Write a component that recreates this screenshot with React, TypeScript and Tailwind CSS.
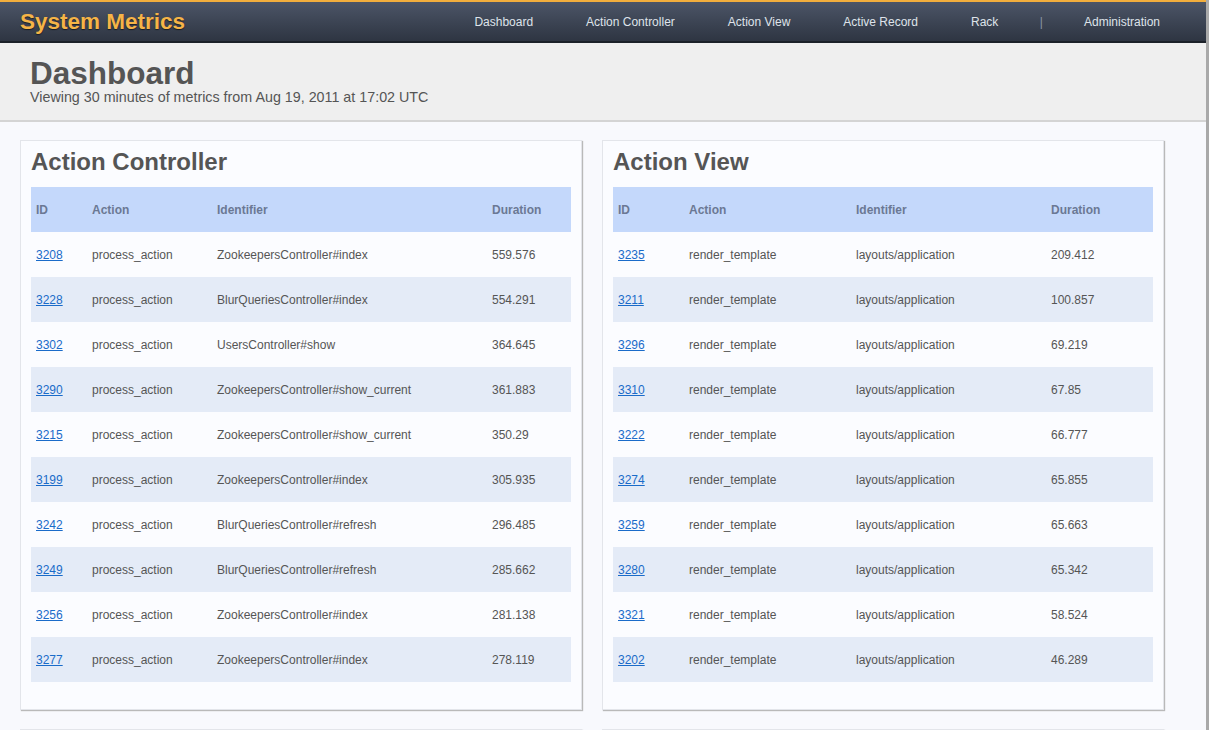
import React from 'react';

type Row = { id: string; action: string; identifier: string; duration: string };

const controllerRows: Row[] = [
  { id: '3208', action: 'process_action', identifier: 'ZookeepersController#index', duration: '559.576' },
  { id: '3228', action: 'process_action', identifier: 'BlurQueriesController#index', duration: '554.291' },
  { id: '3302', action: 'process_action', identifier: 'UsersController#show', duration: '364.645' },
  { id: '3290', action: 'process_action', identifier: 'ZookeepersController#show_current', duration: '361.883' },
  { id: '3215', action: 'process_action', identifier: 'ZookeepersController#show_current', duration: '350.29' },
  { id: '3199', action: 'process_action', identifier: 'ZookeepersController#index', duration: '305.935' },
  { id: '3242', action: 'process_action', identifier: 'BlurQueriesController#refresh', duration: '296.485' },
  { id: '3249', action: 'process_action', identifier: 'BlurQueriesController#refresh', duration: '285.662' },
  { id: '3256', action: 'process_action', identifier: 'ZookeepersController#index', duration: '281.138' },
  { id: '3277', action: 'process_action', identifier: 'ZookeepersController#index', duration: '278.119' },
];

const viewRows: Row[] = [
  { id: '3235', action: 'render_template', identifier: 'layouts/application', duration: '209.412' },
  { id: '3211', action: 'render_template', identifier: 'layouts/application', duration: '100.857' },
  { id: '3296', action: 'render_template', identifier: 'layouts/application', duration: '69.219' },
  { id: '3310', action: 'render_template', identifier: 'layouts/application', duration: '67.85' },
  { id: '3222', action: 'render_template', identifier: 'layouts/application', duration: '66.777' },
  { id: '3274', action: 'render_template', identifier: 'layouts/application', duration: '65.855' },
  { id: '3259', action: 'render_template', identifier: 'layouts/application', duration: '65.663' },
  { id: '3280', action: 'render_template', identifier: 'layouts/application', duration: '65.342' },
  { id: '3321', action: 'render_template', identifier: 'layouts/application', duration: '58.524' },
  { id: '3202', action: 'render_template', identifier: 'layouts/application', duration: '46.289' },
];

const navItems = ['Dashboard', 'Action Controller', 'Action View', 'Active Record', 'Rack'];

const cardBox = 'w-[562px] bg-[#fbfcff] border border-[#e3e5ea] shadow-[1px_1px_1px_#b9b9b9]';

// column widths per table: id, action, identifier (duration takes the rest)
const MetricsCard: React.FC<{ title: string; rows: Row[]; cols: [string, string, string] }> = ({ title, rows, cols }) => (
  <div className={`${cardBox} px-[10px] pt-[4px] pb-[27px]`}>
    <h2 className="text-[24px] font-bold text-[#555] leading-[34px] mb-[8px]">{title}</h2>
    <table className="w-[540px] border-collapse text-[12px] text-[#555] table-fixed">
      <thead>
        <tr className="bg-[#c4d8fb] h-[45px] text-left text-[#6b7894]">
          <th className={`${cols[0]} pl-[5px] font-bold`}>ID</th>
          <th className={`${cols[1]} pl-[5px] font-bold`}>Action</th>
          <th className={`${cols[2]} pl-[5px] font-bold`}>Identifier</th>
          <th className="pl-[5px] font-bold">Duration</th>
        </tr>
      </thead>
      <tbody>
        {rows.map((r, i) => (
          <tr key={r.id} className={`h-[45px] ${i % 2 === 1 ? 'bg-[#e4ebf7]' : ''}`}>
            <td className="pl-[5px]">
              <a href="#" className="text-[#1a6bc9] underline">{r.id}</a>
            </td>
            <td className="pl-[5px]">{r.action}</td>
            <td className="pl-[5px]">{r.identifier}</td>
            <td className="pl-[5px]">{r.duration}</td>
          </tr>
        ))}
      </tbody>
    </table>
  </div>
);

export default function App() {
  return (
    <div className="min-h-[730px] bg-[#f8f9fd] border-r-[3px] border-[#a9a9a9] font-['Liberation_Sans',Arial,sans-serif]">
      {/* top bar */}
      <div className="h-[43px] border-t-2 border-[#f2ae3d] bg-gradient-to-b from-[#4c5567] to-[#2e3542] border-b-2 border-b-[#1c2129] flex items-center justify-between pl-[20px] pr-[20px]">
        <div className="text-[22.5px] font-bold text-[#f5b447] [text-shadow:0_1px_1px_#1a1d24] leading-none pt-[2px]">System Metrics</div>
        <nav className="flex items-center text-[12px] text-[#dfe3ea]">
          {navItems.map((n) => (
            <a key={n} href="#" className="px-[26.5px]">{n}</a>
          ))}
          <span className="px-[15px] text-[#8a93a3]">|</span>
          <a href="#" className="px-[26px]">Administration</a>
        </nav>
      </div>

      {/* page header */}
      <div className="bg-[#efefef] border-b-2 border-[#d4d4d4] pl-[30px] pt-[13px] h-[79px]">
        <h1 className="text-[31.5px] font-bold text-[#555] leading-[34px]">Dashboard</h1>
        <p className="text-[14.3px] text-[#555] leading-[14px]">Viewing 30 minutes of metrics from Aug 19, 2011 at 17:02 UTC</p>
      </div>

      {/* cards */}
      <div className="pl-[20px] pt-[18px] flex flex-wrap gap-x-[20px] gap-y-[19px] w-[1180px]">
        <MetricsCard title="Action Controller" rows={controllerRows} cols={['w-[56px]', 'w-[125px]', 'w-[275px]']} />
        <MetricsCard title="Action View" rows={viewRows} cols={['w-[71px]', 'w-[167px]', 'w-[195px]']} />
        <div className={`${cardBox} h-[200px]`} />
        <div className={`${cardBox} h-[200px]`} />
      </div>
    </div>
  );
}
